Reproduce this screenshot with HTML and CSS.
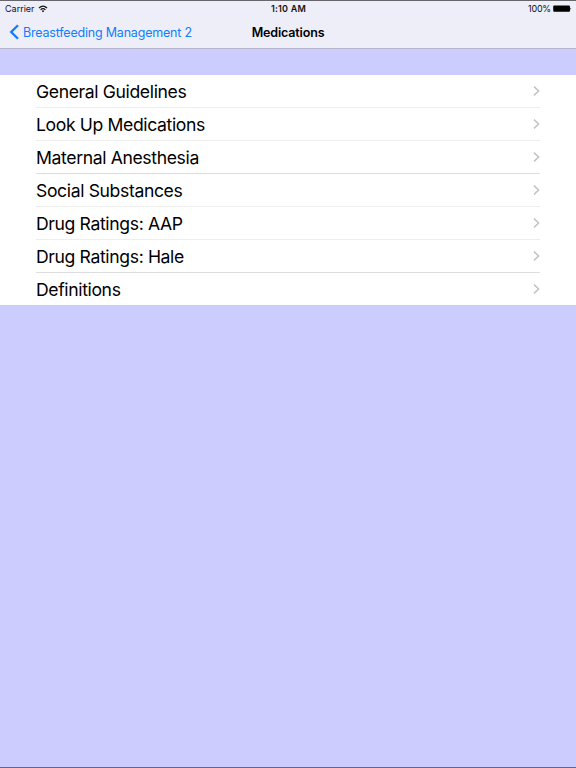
FILE: index.html
```
<!DOCTYPE html>
<html lang="en">
<head>
	<meta charset="UTF-8">
	<title>Medications</title>
	<link rel="stylesheet" href="styles.css">
</head>
<body>
	<div class="screen">
		<header class="header">
			<div class="status">
				<div class="carrier">
					<span>Carrier</span>
					<svg width="10" height="8" viewBox="0 0 10 8">
						<path d="M1 3 Q5 -0.8 9 3" fill="none" stroke="#111" stroke-width="1.2"/>
						<path d="M2.6 4.7 Q5 2.5 7.4 4.7" fill="none" stroke="#111" stroke-width="1.2"/>
						<path d="M3.7 5.9 Q5 4.8 6.3 5.9 L5 7.3z" fill="#111"/>
					</svg>
				</div>
				<div class="time">1:10 AM</div>
				<div class="power">
					<span>100%</span>
					<svg width="19" height="8" viewBox="0 0 19 8">
						<rect x="0.2" y="0.6" width="16.8" height="6.2" rx="1" fill="#000"/>
						<path d="M17.5 2.5 Q18.9 3.7 17.5 4.9z" fill="#000"/>
					</svg>
				</div>
			</div>
			<nav class="nav">
				<a class="back">
					<svg width="10" height="16" viewBox="0 0 10 16">
						<path d="M9 1.2 L2.2 8 L9 14.8" fill="none" stroke="#127dfb" stroke-width="2.3"/>
					</svg>
					<span>Breastfeeding Management 2</span>
				</a>
				<h1 class="title">Medications</h1>
				<div class="side"></div>
			</nav>
		</header>
		<ul class="list">
			<li><span>General Guidelines</span><svg width="7" height="10" viewBox="0 0 7 10"><path d="M1 .6L5.6 5L1 9.4"/></svg></li>
			<li><span>Look Up Medications</span><svg width="7" height="10" viewBox="0 0 7 10"><path d="M1 .6L5.6 5L1 9.4"/></svg></li>
			<li class="dark"><span>Maternal Anesthesia</span><svg width="7" height="10" viewBox="0 0 7 10"><path d="M1 .6L5.6 5L1 9.4"/></svg></li>
			<li><span>Social Substances</span><svg width="7" height="10" viewBox="0 0 7 10"><path d="M1 .6L5.6 5L1 9.4"/></svg></li>
			<li><span>Drug Ratings: AAP</span><svg width="7" height="10" viewBox="0 0 7 10"><path d="M1 .6L5.6 5L1 9.4"/></svg></li>
			<li class="dark"><span>Drug Ratings: Hale</span><svg width="7" height="10" viewBox="0 0 7 10"><path d="M1 .6L5.6 5L1 9.4"/></svg></li>
			<li><span>Definitions</span><svg width="7" height="10" viewBox="0 0 7 10"><path d="M1 .6L5.6 5L1 9.4"/></svg></li>
		</ul>
	</div>
</body>
</html>
```
FILE: styles.css
```
*{
	margin: 0;
	padding: 0;
	box-sizing: border-box;
}
body{
	font-family: Inter, "Liberation Sans", sans-serif;
	color: #000;
}
.screen{
	height: 768px;
	background-color: #ccccff;
	border-top: 1px solid #66656c;
	border-bottom: 1px solid #66667f;
	overflow: hidden;
}
.header{
	height: 48px;
	background-color: #eeeef8;
	border-bottom: 1px solid #b4b4cb;
}
.status{
	display: grid;
	grid-template-columns: 1fr auto 1fr;
	height: 15px;
	line-height: 15px;
	padding: 0 4px 0 5px;
	font-size: 9px;
	color: #111;
}
.carrier, .power{
	display: flex;
	align-items: center;
}
.carrier{
	gap: 3px;
}
.power{
	justify-content: flex-end;
	gap: 2px;
	letter-spacing: -0.2px;
}
.time{
	font-weight: 600;
	letter-spacing: 0.2px;
}
.nav{
	display: grid;
	grid-template-columns: 1fr auto 1fr;
	align-items: center;
	height: 32px;
	padding-left: 9px;
	padding-right: 9px;
}
.back{
	display: flex;
	align-items: center;
	gap: 4px;
	font-size: 12.5px;
	letter-spacing: -0.2px;
	color: #127dfb;
	white-space: nowrap;
}
.title{
	font-size: 12.5px;
	font-weight: 600;
	letter-spacing: -0.15px;
}
.list{
	margin-top: 26px;
	height: 230px;
	padding: 0 36px;
	background-color: #fff;
	list-style: none;
}
.list li{
	display: flex;
	justify-content: space-between;
	align-items: center;
	height: 33px;
	border-bottom: 1px solid #eeeeef;
	font-size: 17.6px;
	letter-spacing: -0.37px;
}
.list li.dark{
	border-bottom-color: #dddddf;
}
.list li:last-child{
	height: 32px;
	border-bottom: none;
}
.list svg{
	fill: none;
	stroke: #c2c2c7;
	stroke-width: 1.5;
}
```
